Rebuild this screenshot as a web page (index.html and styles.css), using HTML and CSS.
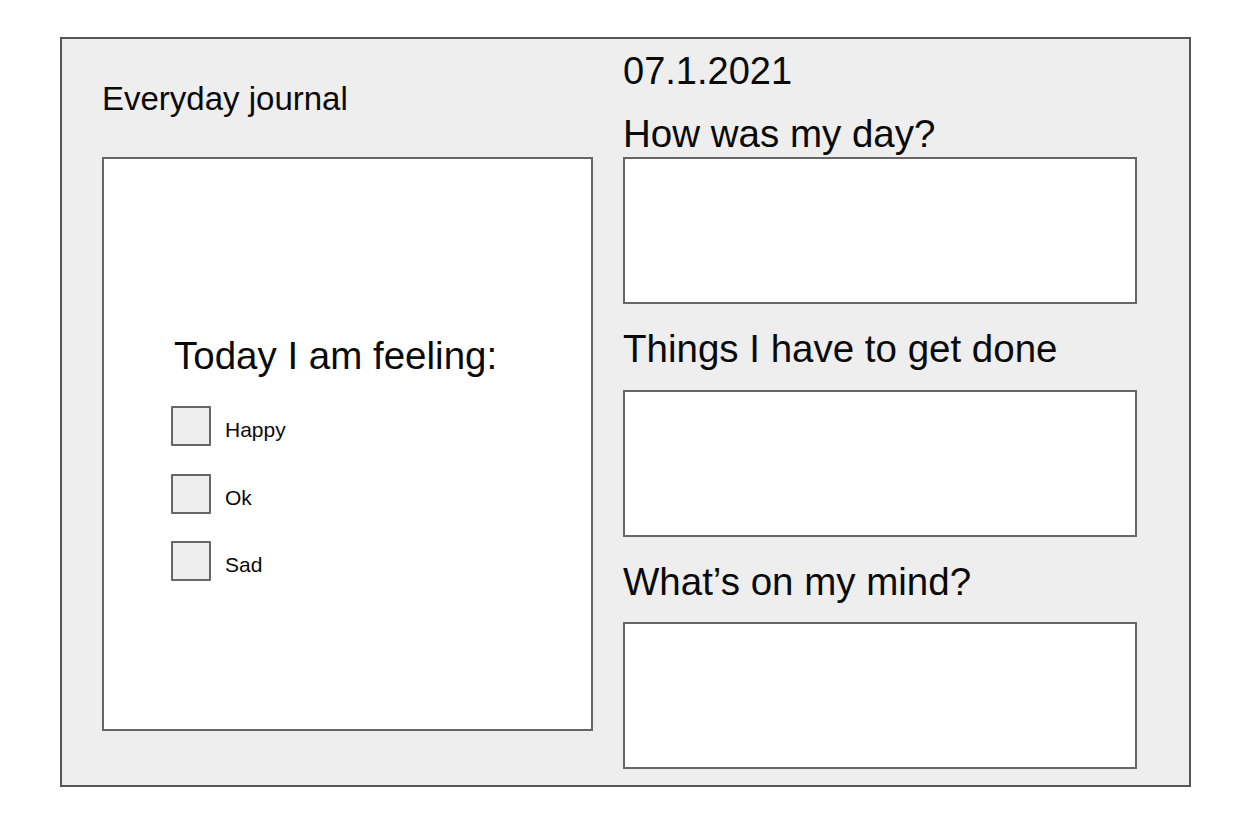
FILE: index.html
```html
<!DOCTYPE html>
<html lang="en">
<head>
<meta charset="utf-8">
<title>Everyday journal</title>
<link rel="stylesheet" href="styles.css">
</head>
<body>
  <div class="frame">
    <div class="left">
      <div class="title">Everyday journal</div>
      <div class="panel">
        <div class="feeling">Today I am feeling:</div>
        <div class="options">
          <div class="option"><span class="check"></span><span class="label">Happy</span></div>
          <div class="option"><span class="check"></span><span class="label">Ok</span></div>
          <div class="option"><span class="check"></span><span class="label">Sad</span></div>
        </div>
      </div>
    </div>
    <div class="right">
      <div class="date">07.1.2021</div>
      <div class="heading heading-first">How was my day?</div>
      <div class="box box-first"></div>
      <div class="heading">Things I have to get done</div>
      <div class="box"></div>
      <div class="heading">What’s on my mind?</div>
      <div class="box box-last"></div>
    </div>
  </div>
</body>
</html>
```
FILE: styles.css
```css
html, body {
  margin: 0;
  background: #ffffff;
}
body {
  padding: 37px 0 0 60px;
  font-family: "Liberation Sans", Arial, sans-serif;
  color: #0a0a0a;
}
.frame {
  box-sizing: border-box;
  width: 1131px;
  height: 750px;
  border: 2px solid #555555;
  background: #eeeeee;
  display: flex;
  padding-left: 40px;
  gap: 30px;
}
.left {
  width: 491px;
  display: flex;
  flex-direction: column;
}
.title {
  margin-top: 43px;
  font-size: 33px;
  line-height: 33px;
  white-space: nowrap;
}
.panel {
  box-sizing: border-box;
  margin-top: 42px;
  height: 574px;
  border: 2px solid #666666;
  background: #ffffff;
  padding: 178px 0 0 67px;
}
.feeling {
  font-size: 38.5px;
  line-height: 38px;
  white-space: nowrap;
  margin-left: 3px;
}
.options {
  margin-top: 31px;
  display: flex;
  flex-direction: column;
  gap: 27.5px;
}
.option {
  display: flex;
  align-items: center;
  height: 40px;
}
.check {
  box-sizing: border-box;
  width: 40px;
  height: 40px;
  border: 2px solid #666666;
  border-radius: 1px;
  background: #eeeeee;
}
.label {
  margin-left: 14px;
  padding-top: 7px;
  font-size: 21px;
  line-height: 21px;
}
.right {
  width: 514px;
  display: flex;
  flex-direction: column;
}
.date {
  margin-top: 13px;
  font-size: 38px;
  line-height: 38px;
}
.heading {
  margin-top: 26px;
  font-size: 38.5px;
  line-height: 38px;
  white-space: nowrap;
}
.heading-first {
  margin-top: 25px;
}
.box {
  box-sizing: border-box;
  margin-top: 22px;
  height: 147px;
  border: 2px solid #666666;
  background: #ffffff;
}
.box-first {
  margin-top: 4px;
}
.box-last {
  margin-top: 21px;
}
```
